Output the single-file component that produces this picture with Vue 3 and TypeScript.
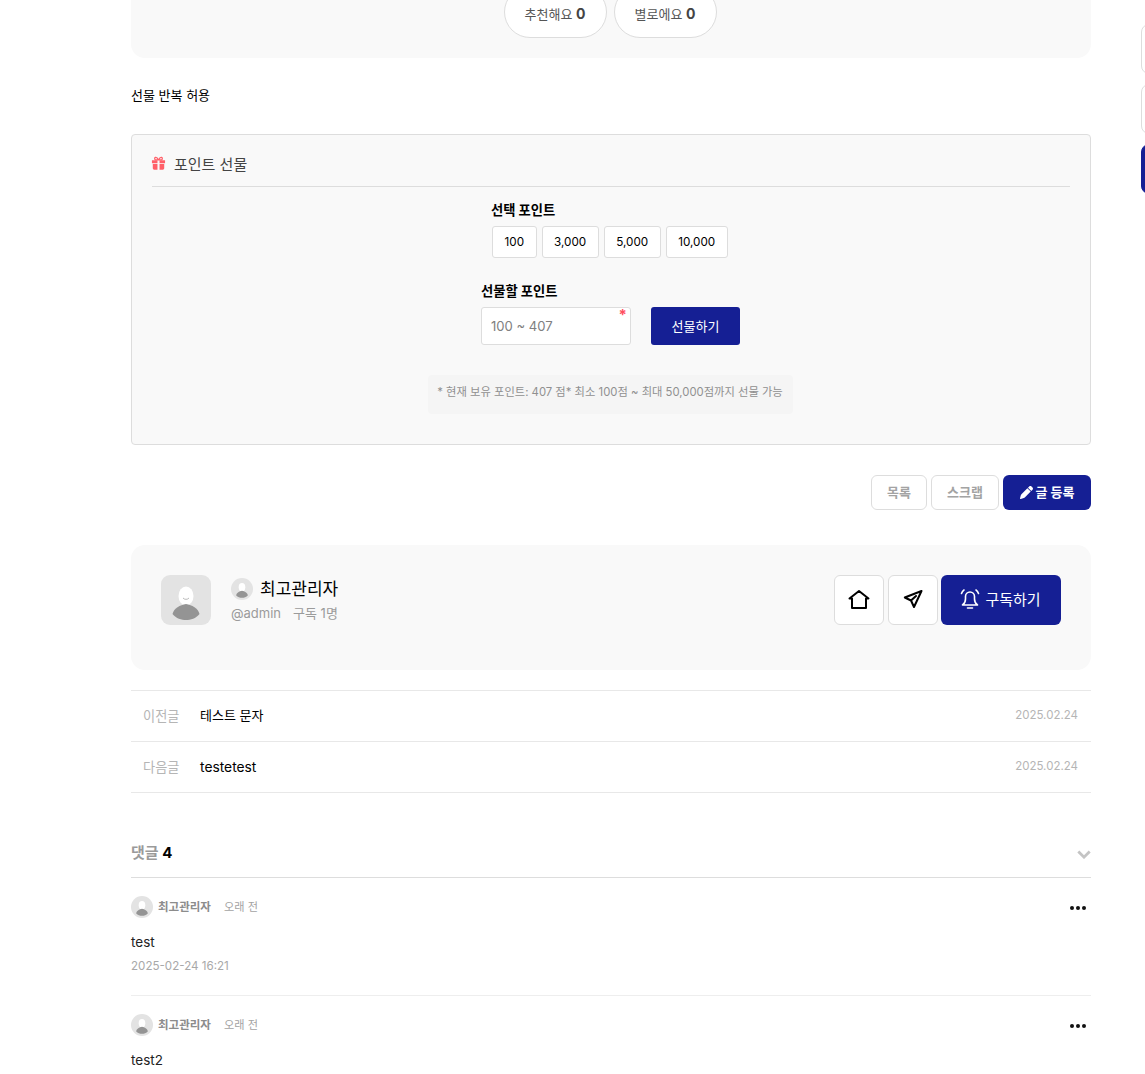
<script setup lang="ts">
const presets: string[] = ['100', '3,000', '5,000', '10,000']
</script>

<template>
  <div class="page">
    <aside class="floaters">
      <span class="floater"></span>
      <span class="floater"></span>
      <span class="floater active"></span>
    </aside>
    <main class="content">
      <section class="vote-card">
        <button class="vote">추천해요 <b>0</b></button>
        <button class="vote">별로에요 <b>0</b></button>
      </section>

      <p class="allow">선물 반복 허용</p>

      <section class="gift">
        <h3 class="gift-title">
          <svg class="gift-icon" viewBox="0 0 16 16" aria-hidden="true">
            <path fill="#ff5f68" d="M1 4.600h5.900v3H1zM9.100 4.600H15v3H9.100zM1.900 8.600h5v6h-3.500a1.500 1.500 0 0 1-1.500-1.500zM9.100 8.600h5v4.500a1.500 1.500 0 0 1-1.500 1.500H9.100z" />
            <path fill="none" stroke="#ff5f68" stroke-width="1.300" d="M8 4.200C7 2 5.800 1.200 4.800 1.400c-1.200.3-1.200 2.300 0 2.800zM8 4.200C9 2 10.200 1.200 11.200 1.400c1.200.3 1.200 2.300 0 2.800z" />
          </svg>
          <span>포인트 선물</span>
        </h3>
        <div class="gift-body">
          <div class="select-block">
            <div class="field-label">선택 포인트</div>
            <div class="presets">
              <button v-for="p in presets" :key="p" class="preset">{{ p }}</button>
            </div>
          </div>
          <div class="amount-block">
            <div class="field-label">선물할 포인트</div>
            <div class="amount-row">
              <div class="input-wrap">
                <input class="amount" placeholder="100 ~ 407" />
                <span class="req">*</span>
              </div>
              <button class="send">선물하기</button>
            </div>
          </div>
          <div class="notice">* 현재 보유 포인트: 407 점* 최소 100점 ~ 최대 50,000점까지 선물 가능</div>
        </div>
      </section>

      <div class="actions">
        <button class="ghost">목록</button>
        <button class="ghost">스크랩</button>
        <button class="write">
          <svg viewBox="0 0 512 512" class="pen" aria-hidden="true">
            <path fill="#fff" d="M362.700 19.300c25-25 65.500-25 90.500 0l39.500 39.500c25 25 25 65.500 0 90.500l-48.400 48.400-130-130zM290.700 91.300l130 130L188 454c-10 10-22.500 17.300-36.200 21.200L30.600 509.900c-8.400 2.400-17.400 0-23.600-6.100s-8.500-15.200-6.100-23.600l34.600-121.200c3.900-13.700 11.200-26.200 21.200-36.200z" />
          </svg>
          <span>글 등록</span>
        </button>
      </div>

      <section class="author">
        <div class="avatar-lg">
          <svg viewBox="0 0 50 50" class="fill" aria-hidden="true">
            <rect width="50" height="50" fill="#e3e3e3" />
            <ellipse cx="25" cy="21" rx="7.500" ry="9.500" fill="#fff" />
            <path d="M11.500 39C13 33 19 30 25 29c6 1 12 4 13.500 10-3.500 4.500-9 6-13.500 6s-10-1.500-13.500-6z" fill="#949494" />
            <path d="M22 23c1.500 1.800 4.500 1.800 6 0" fill="none" stroke="#a8a8a8" stroke-width=".8" />
          </svg>
        </div>
        <div class="author-info">
          <div class="author-name">
            <svg viewBox="0 0 50 50" class="avatar-sm" aria-hidden="true">
              <circle cx="25" cy="25" r="25" fill="#e3e3e3" />
              <ellipse cx="25" cy="21" rx="7.500" ry="9.500" fill="#fff" />
              <path d="M11.500 39C13 33 19 30 25 29c6 1 12 4 13.500 10-3.500 4.500-9 6-13.500 6s-10-1.500-13.500-6z" fill="#949494" />
            </svg>
            <span class="name-text">최고관리자</span>
          </div>
          <div class="author-meta"><span>@admin</span><span>구독 1명</span></div>
        </div>
        <div class="author-actions">
          <button class="icon-btn">
            <svg viewBox="0 0 24 24" width="24" height="24" aria-hidden="true">
              <path d="M2.500 10.500 12 3l9.500 7.500H19v9.500H5v-9.500z" fill="none" stroke="#000" stroke-width="2" stroke-linejoin="round" />
            </svg>
          </button>
          <button class="icon-btn">
            <svg class="send-icon" viewBox="0 0 24 24" width="24" height="24" aria-hidden="true">
              <path d="M20.500 4 3.800 10.500l6.200 3 3 6.500zM10 13.500 15 9" fill="none" stroke="#000" stroke-width="2" stroke-linejoin="round" stroke-linecap="round" />
            </svg>
          </button>
          <button class="subscribe">
            <svg class="bell" viewBox="0 0 24 24" width="24" height="24" aria-hidden="true">
              <path d="M4.500 18c2.200-1.500 3-3.500 3-6V9.500a4.500 4.500 0 0 1 9 0V12c0 2.500.8 4.500 3 6zM9.500 21h5M3.500 6.500c.5-1.500 1.300-2.700 2.500-3.500M20.500 6.500c-.5-1.500-1.300-2.700-2.500-3.500" fill="none" stroke="#fff" stroke-width="1.600" stroke-linecap="round" stroke-linejoin="round" />
            </svg>
            <span class="sub-text">구독하기</span>
          </button>
        </div>
      </section>

      <nav class="pager">
        <div class="pager-row">
          <span class="pager-label">이전글</span>
          <span class="pager-title ko">테스트 문자</span>
          <span class="pager-date">2025.02.24</span>
        </div>
        <div class="pager-row">
          <span class="pager-label">다음글</span>
          <span class="pager-title en">testetest</span>
          <span class="pager-date">2025.02.24</span>
        </div>
      </nav>

      <section class="comments">
        <header class="comments-head">
          <h4>댓글 <b>4</b></h4>
          <svg viewBox="0 0 16 10" width="14" height="9" aria-hidden="true">
            <path d="M1.500 1.500 8 8l6.500-6.500" fill="none" stroke="#c4c4c4" stroke-width="3.200" />
          </svg>
        </header>
        <article class="comment">
          <div class="comment-top">
            <svg viewBox="0 0 50 50" class="avatar-c" aria-hidden="true">
              <circle cx="25" cy="25" r="25" fill="#e3e3e3" />
              <ellipse cx="25" cy="21" rx="7.500" ry="9.500" fill="#fff" />
              <path d="M11.500 39C13 33 19 30 25 29c6 1 12 4 13.500 10-3.500 4.500-9 6-13.500 6s-10-1.500-13.500-6z" fill="#949494" />
            </svg>
            <b class="c-name">최고관리자</b>
            <span class="c-time">오래 전</span>
            <span class="dots"><i></i><i></i><i></i></span>
          </div>
          <p class="c-text">test</p>
          <div class="c-date">2025-02-24 16:21</div>
        </article>
        <article class="comment">
          <div class="comment-top">
            <svg viewBox="0 0 50 50" class="avatar-c" aria-hidden="true">
              <circle cx="25" cy="25" r="25" fill="#e3e3e3" />
              <ellipse cx="25" cy="21" rx="7.500" ry="9.500" fill="#fff" />
              <path d="M11.500 39C13 33 19 30 25 29c6 1 12 4 13.500 10-3.500 4.500-9 6-13.500 6s-10-1.500-13.500-6z" fill="#949494" />
            </svg>
            <b class="c-name">최고관리자</b>
            <span class="c-time">오래 전</span>
            <span class="dots"><i></i><i></i><i></i></span>
          </div>
          <p class="c-text">test2</p>
        </article>
      </section>
    </main>
  </div>
</template>

<style>
html, body { margin: 0; background: #fff; overflow: hidden; }
</style>

<style scoped>
* { box-sizing: border-box; }
button, input { font-family: inherit; }
button { cursor: pointer; }
.page {
  height: 1074px;
  overflow: hidden;
  font-family: Inter, "Noto Sans CJK KR", sans-serif;
  color: #000;
  font-size: 13px;
}
.floaters {
  position: fixed;
  left: 1141px;
  top: 24px;
  display: flex;
  flex-direction: column;
  gap: 10px;
}
.floater {
  width: 50px;
  height: 50px;
  background: #fff;
  border: 1px solid #ddd;
  border-radius: 8px;
}
.floater.active { background: #151f94; border-color: #151f94; }
.content { width: 960px; margin-left: 131px; }
.vote-card {
  height: 58px;
  background: #f9f9f9;
  border-radius: 0 0 14px 14px;
  display: flex;
  justify-content: center;
  align-items: flex-end;
  gap: 7px;
  padding: 0 2px 20px 0;
}
.vote {
  width: 103px;
  height: 52px;
  flex: none;
  background: #fff;
  border: 1px solid #ddd;
  border-radius: 26px;
  font-size: 13px;
  color: #555;
  padding: 2px 0 0;
}
.vote b { font-size: 14px; color: #444; }
.allow { margin: 27px 0 0; height: 20px; font-size: 13px; line-height: 20px; }
.gift {
  margin-top: 29px;
  height: 311px;
  background: #f9f9f9;
  border: 1px solid #ddd;
  border-radius: 4px;
  padding: 0 20px;
}
.gift-title {
  margin: 0;
  height: 52px;
  padding-top: 6px;
  display: flex;
  align-items: center;
  gap: 9px;
  font-size: 15px;
  font-weight: 400;
  color: #444;
  border-bottom: 1px solid #ddd;
}
.gift-icon { width: 15px; height: 15px; margin-left: -1px; margin-right: -1px; }
.gift-body { display: flex; flex-direction: column; align-items: center; }
.field-label { font-size: 13.300px; font-weight: 700; line-height: 18px; margin-left: -1px; }
.select-block { width: 238px; margin-top: 14px; }
.presets { display: flex; gap: 5px; margin-top: 7px; }
.preset {
  height: 32px;
  padding: 0 11.500px;
  background: #fff;
  border: 1px solid #ddd;
  border-radius: 3px;
  font-size: 11.700px;
  color: #000;
}
.amount-block { width: 260px; margin-top: 24px; }
.amount-block .field-label { margin-left: 0; }
.amount-row { display: flex; gap: 20px; margin-top: 7px; }
.input-wrap { position: relative; width: 150px; height: 38px; }
.amount {
  width: 100%;
  height: 100%;
  border: 1px solid #ddd;
  border-radius: 3px;
  background: #fff;
  padding: 0 9px;
  font-size: 13.100px;
  outline: none;
}
.amount::placeholder { color: #808080; opacity: 1; }
.req {
  position: absolute;
  right: 4px;
  top: 1px;
  color: #ff4d5e;
  font-size: 15px;
  font-weight: 700;
  line-height: 14px;
}
.send {
  width: 89px;
  height: 38px;
  background: #151f94;
  color: #fff;
  border: 0;
  border-radius: 3px;
  font-size: 13px;
  padding: 0 0 1px;
}
.notice {
  margin-top: 30px;
  margin-right: 2px;
  width: 365px;
  height: 39px;
  background: #f5f5f5;
  border-radius: 4px;
  color: #909090;
  font-size: 11.300px;
  line-height: 34px;
  text-align: center;
  white-space: nowrap;
}
.actions { margin-top: 30px; display: flex; justify-content: flex-end; gap: 4px; }
.ghost, .write {
  height: 35px;
  border-radius: 6px;
  font-size: 13px;
  font-weight: 700;
  padding: 0 0 2px;
}
.ghost { background: #fff; border: 1px solid #ddd; color: #a3a3a3; width: 56px; }
.ghost:nth-child(2) { width: 68px; }
.write {
  width: 88px;
  background: #151f94;
  border: 0;
  color: #fff;
  display: flex;
  align-items: center;
  justify-content: center;
  gap: 3px;
}
.pen { width: 13px; height: 13px; margin-top: 2px; }
.author {
  margin-top: 35px;
  height: 125px;
  background: #f9f9f9;
  border-radius: 14px;
  padding: 30px;
  display: flex;
  align-items: flex-start;
}
.avatar-lg { width: 50px; height: 50px; border-radius: 9px; overflow: hidden; }
.fill { width: 100%; height: 100%; display: block; }
.author-info { margin-left: 20px; }
.author-name {
  display: flex;
  align-items: center;
  gap: 7px;
  font-size: 17px;
  height: 28px;
}
.name-text { margin-top: -4px; }
.avatar-sm { width: 22px; height: 22px; }
.author-meta {
  display: flex;
  gap: 12px;
  color: #9b9b9b;
  font-size: 13px;
  line-height: 20px;
}
.author-actions { margin-left: auto; display: flex; }
.icon-btn {
  width: 50px;
  height: 50px;
  background: #fff;
  border: 1px solid #ddd;
  border-radius: 6px;
  margin-right: 4px;
  display: flex;
  align-items: center;
  justify-content: center;
  padding: 0;
}
.icon-btn + .icon-btn { margin-right: 3px; }
.send-icon { margin-top: -2px; }
.subscribe {
  width: 120px;
  height: 50px;
  background: #151f94;
  color: #fff;
  border: 0;
  border-radius: 6px;
  font-size: 15px;
  display: flex;
  align-items: center;
  justify-content: center;
  gap: 3px;
  padding: 0 3px 2px 0;
}
.sub-text { margin-top: -1px; }
.pager { margin-top: 20px; border-top: 1px solid #e8e8e8; }
.pager-row {
  height: 51px;
  border-bottom: 1px solid #e8e8e8;
  display: flex;
  align-items: center;
  padding: 0 13px 0 12px;
}
.pager-label { width: 57px; color: #b5b5b5; font-size: 13.200px; margin-top: -2px; }
.pager-title.ko { font-size: 13px; margin-top: -4px; }
.pager-title.en { font-size: 13.800px; }
.pager-date { margin-left: auto; font-size: 11.500px; color: #b5b5b5; margin-top: -2px; }
.comments { margin-top: 34px; }
.comments-head {
  height: 51px;
  display: flex;
  align-items: center;
  justify-content: space-between;
  border-bottom: 1px solid #ddd;
}
.comments-head svg { margin-top: 4px; }
.comments-head h4 { margin: -2px 0 0; font-size: 15px; font-weight: 700; color: #9a9a9a; }
.comments-head b { color: #000; font-weight: 700; }
.comment { padding: 18px 0 0; height: 118px; border-bottom: 1px solid #eee; }
.comment-top { display: flex; align-items: center; height: 22px; }
.avatar-c { width: 22px; height: 22px; }
.c-name { margin-left: 5px; margin-top: -2px; font-size: 11.500px; color: #8c8c8c; }
.c-time { margin-left: 13px; margin-top: -2px; font-size: 11.200px; color: #a3a3a3; }
.dots { margin-left: auto; margin-right: 5px; margin-top: 2px; display: flex; gap: 2px; }
.dots i { width: 4px; height: 4px; background: #111; border-radius: 50%; }
.c-text { margin: 14px 0 0; font-size: 13.500px; line-height: 20px; color: #222; }
.c-date { margin-top: 6px; font-size: 11.600px; line-height: 16px; color: #a8a8a8; }
</style>
